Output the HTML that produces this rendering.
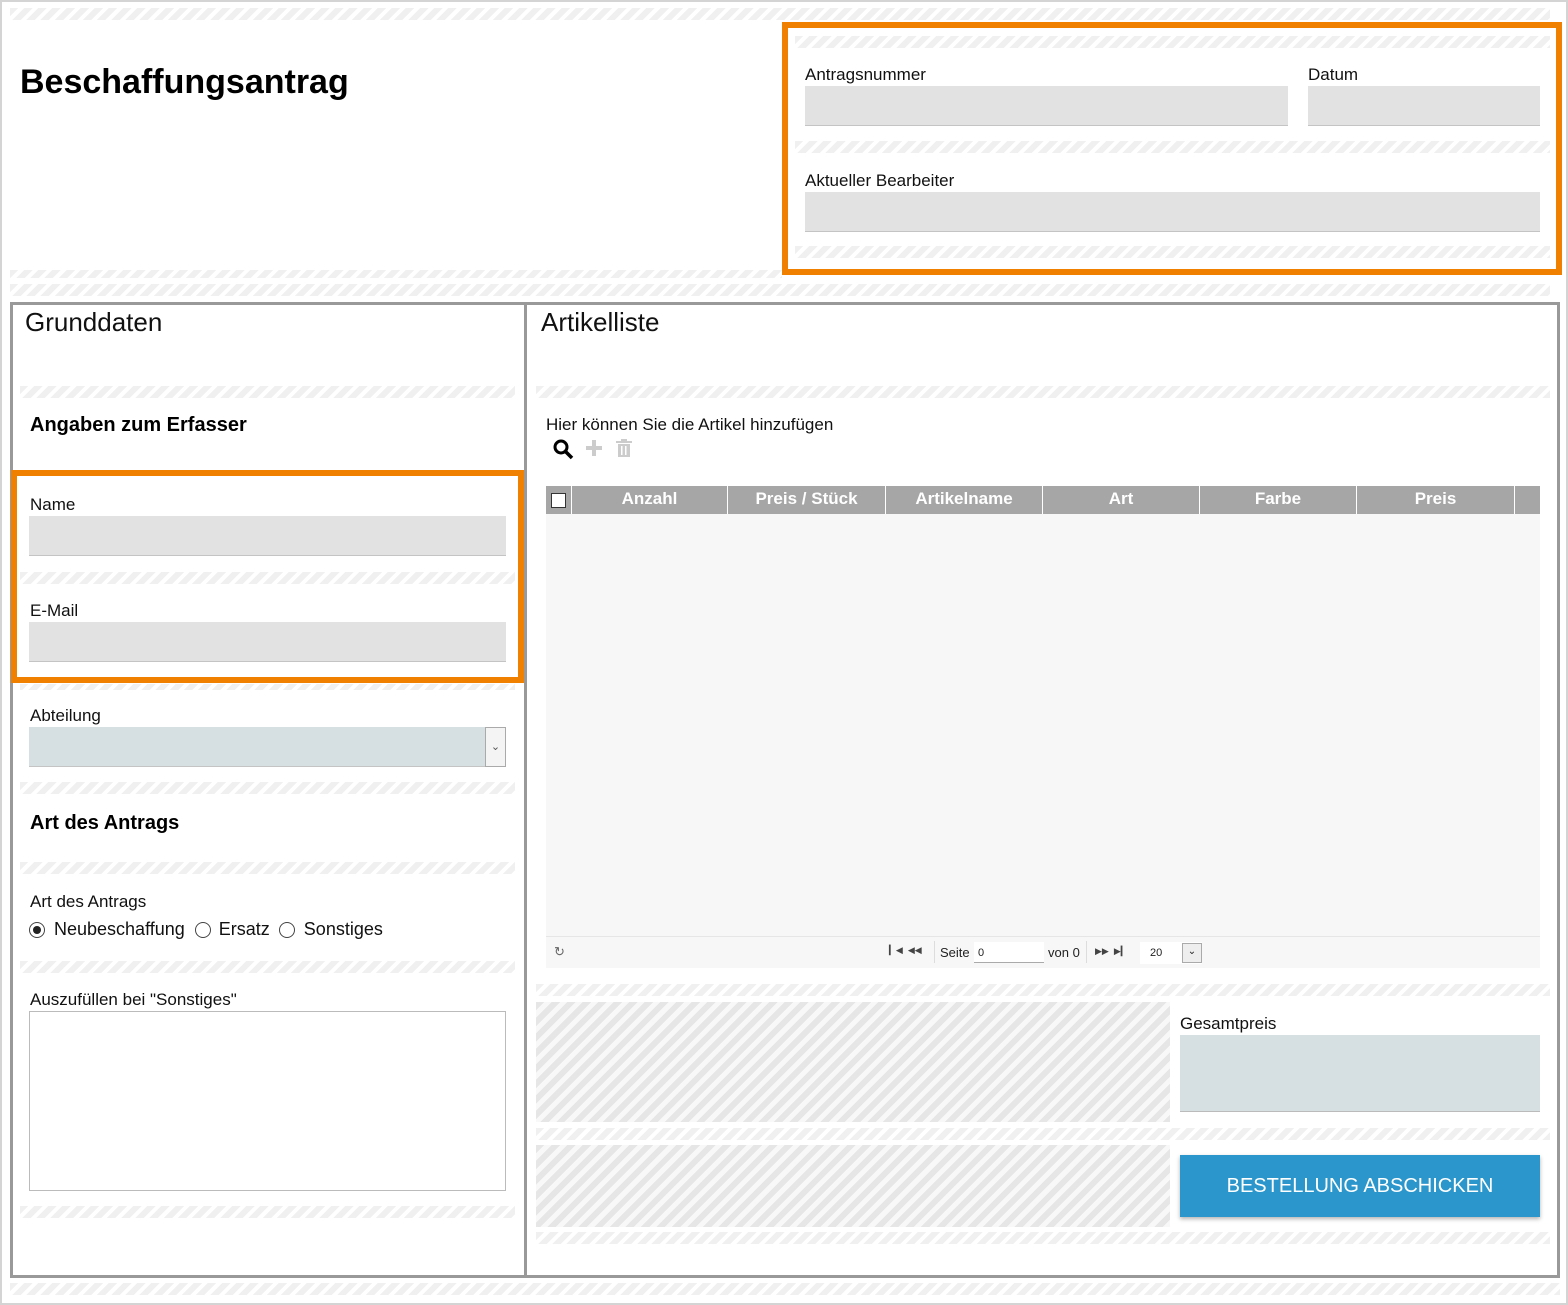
<!DOCTYPE html>
<html><head><meta charset="utf-8"><style>
*{box-sizing:border-box;margin:0;padding:0}
body{width:1568px;height:1305px;position:relative;background:#fff;font-family:"Liberation Sans",sans-serif;color:#111;overflow:hidden}
.a{position:absolute}
.s{position:absolute;height:12px;background:repeating-linear-gradient(135deg,#f0f0f0 0 6px,#fff 6px 10px)}
.h{position:absolute;background:repeating-linear-gradient(135deg,#e6e6e6 0 6px,#f8f8f8 6px 11px)}
.lb{position:absolute;font-size:17px}
.in{position:absolute;background:#e2e2e2;border-bottom:1px solid #c4c4c4}
.ob{position:absolute;border:6px solid #f08000}
.th{position:absolute;top:486px;height:28px;background:#a6a6a6;color:#fff;font-weight:bold;font-size:17px;text-align:center;line-height:26px;border-right:1px solid #fff}
</style></head><body>
<div class="a" style="left:0;top:0;width:1568px;height:1305px;border:2px solid #d4d4d4"></div>
<div class="s" style="left:10px;top:8px;width:1540px"></div>
<div class="a" style="left:20px;top:63px;font-size:34px;font-weight:bold;color:#000">Beschaffungsantrag</div>
<div class="ob" style="left:782px;top:22px;width:780px;height:253px"></div>
<div class="s" style="left:795px;top:36px;width:755px"></div>
<div class="lb" style="left:805px;top:65px">Antragsnummer</div>
<div class="lb" style="left:1308px;top:65px">Datum</div>
<div class="in" style="left:805px;top:86px;width:483px;height:40px"></div>
<div class="in" style="left:1308px;top:86px;width:232px;height:40px"></div>
<div class="s" style="left:795px;top:141px;width:755px"></div>
<div class="lb" style="left:805px;top:171px">Aktueller Bearbeiter</div>
<div class="in" style="left:805px;top:192px;width:735px;height:40px"></div>
<div class="s" style="left:795px;top:246px;width:755px"></div>
<div class="s" style="left:10px;top:270px;width:772px;height:8px"></div>
<div class="s" style="left:10px;top:284px;width:1540px"></div>
<!-- left panel -->
<div class="a" style="left:10px;top:302px;width:517px;height:976px;border:3px solid #999"></div>
<div class="a" style="left:25px;top:307px;font-size:26px">Grunddaten</div>
<div class="s" style="left:20px;top:386px;width:495px"></div>
<div class="a" style="left:30px;top:414px;font-size:20px;font-weight:bold;color:#000">Angaben zum Erfasser</div>
<div class="ob" style="left:11px;top:470px;width:513px;height:213px"></div>
<div class="lb" style="left:30px;top:495px">Name</div>
<div class="in" style="left:29px;top:516px;width:477px;height:40px"></div>
<div class="s" style="left:20px;top:572px;width:495px"></div>
<div class="lb" style="left:30px;top:601px">E-Mail</div>
<div class="in" style="left:29px;top:622px;width:477px;height:40px"></div>
<div class="s" style="left:20px;top:684px;width:495px;height:6px"></div>
<div class="lb" style="left:30px;top:706px">Abteilung</div>
<div class="a" style="left:29px;top:727px;width:477px;height:40px;background:#d6dfe2;border-bottom:1px solid #c4c4c4"></div>
<div class="a" style="left:485px;top:727px;width:21px;height:40px;background:#f4f4f4;border:1px solid #aaa;font-size:11px;text-align:center;line-height:38px;color:#555">&#8964;</div>
<div class="s" style="left:20px;top:782px;width:495px"></div>
<div class="a" style="left:30px;top:812px;font-size:20px;font-weight:bold;color:#000">Art des Antrags</div>
<div class="s" style="left:20px;top:862px;width:495px"></div>
<div class="lb" style="left:30px;top:892px">Art des Antrags</div>
<div class="a" style="left:29px;top:919px;font-size:18px;display:flex;align-items:center;gap:0">
<span style="width:16px;height:16px;border:1px solid #444;border-radius:50%;display:inline-flex;align-items:center;justify-content:center;margin-right:9px"><span style="width:8px;height:8px;background:#222;border-radius:50%"></span></span>Neubeschaffung
<span style="width:16px;height:16px;border:1px solid #444;border-radius:50%;display:inline-block;margin:0 8px 0 10px"></span>Ersatz
<span style="width:16px;height:16px;border:1px solid #444;border-radius:50%;display:inline-block;margin:0 9px 0 9px"></span>Sonstiges</div>
<div class="s" style="left:20px;top:961px;width:495px"></div>
<div class="lb" style="left:30px;top:990px">Auszufüllen bei "Sonstiges"</div>
<div class="a" style="left:29px;top:1011px;width:477px;height:180px;border:1px solid #bbb"></div>
<div class="s" style="left:20px;top:1206px;width:495px"></div>
<!-- right panel -->
<div class="a" style="left:524px;top:302px;width:1036px;height:976px;border:3px solid #999"></div>
<div class="a" style="left:541px;top:307px;font-size:26px">Artikelliste</div>
<div class="s" style="left:536px;top:386px;width:1014px"></div>
<div class="lb" style="left:546px;top:415px">Hier können Sie die Artikel hinzufügen</div>
<svg class="a" style="left:552px;top:438px" width="90" height="22"><circle cx="9" cy="9" r="6" fill="none" stroke="#000" stroke-width="3"/><line x1="13" y1="13" x2="20" y2="20" stroke="#000" stroke-width="3.5"/><rect x="34" y="8" width="16" height="4" fill="#ccc"/><rect x="40" y="2" width="4" height="16" fill="#ccc"/><rect x="64" y="3" width="16" height="2" fill="#ccc"/><rect x="69" y="1" width="6" height="2" fill="#ccc"/><rect x="66" y="6" width="12" height="13" fill="#ccc"/><rect x="69" y="8" width="1.5" height="9" fill="#fff"/><rect x="73" y="8" width="1.5" height="9" fill="#fff"/></svg>
<div class="a" style="left:546px;top:514px;width:994px;height:422px;background:#f7f7f7"></div>
<div class="th" style="left:546px;width:26px"><span style="display:inline-block;width:15px;height:15px;background:#fff;border:1px solid #333;margin-top:7px"></span></div>
<div class="th" style="left:572px;width:156px">Anzahl</div>
<div class="th" style="left:728px;width:158px">Preis / Stück</div>
<div class="th" style="left:886px;width:157px">Artikelname</div>
<div class="th" style="left:1043px;width:157px">Art</div>
<div class="th" style="left:1200px;width:157px">Farbe</div>
<div class="th" style="left:1357px;width:158px">Preis</div>
<div class="th" style="left:1515px;width:25px;border-right:0"></div>
<div class="a" style="left:546px;top:936px;width:994px;height:32px;background:#f7f7f7;border-top:1px solid #e6e6e6;font-size:13px;color:#222">
<span class="a" style="left:8px;top:7px;color:#666">&#8635;</span>
<span class="a" style="left:343px;top:8px;font-size:9px;color:#444">&#9614;&#9664; &nbsp;&#9664;&#9664;</span>
<span class="a" style="left:388px;top:4px;width:1px;height:22px;background:#ddd"></span>
<span class="a" style="left:394px;top:8px">Seite</span>
<span class="a" style="left:428px;top:5px;width:70px;height:21px;background:#fff;border-bottom:1px solid #aaa;font-size:11px;padding:5px 4px">0</span>
<span class="a" style="left:502px;top:8px">von 0</span>
<span class="a" style="left:540px;top:4px;width:1px;height:22px;background:#ddd"></span>
<span class="a" style="left:549px;top:9px;font-size:9px;color:#444">&#9654;&#9654; &nbsp;&#9654;&#9614;</span>
<span class="a" style="left:594px;top:5px;width:62px;height:22px;background:#fff;font-size:11px;padding:5px 10px">20</span>
<span class="a" style="left:636px;top:6px;width:20px;height:20px;background:#eee;border:1px solid #aaa;font-size:10px;text-align:center;line-height:16px">&#8964;</span>
</div>
<div class="s" style="left:536px;top:984px;width:1014px"></div>
<div class="h" style="left:536px;top:1002px;width:634px;height:120px"></div>
<div class="lb" style="left:1180px;top:1014px">Gesamtpreis</div>
<div class="a" style="left:1180px;top:1035px;width:360px;height:77px;background:#d6dfe2;border-bottom:1px solid #bbb"></div>
<div class="s" style="left:536px;top:1128px;width:1014px"></div>
<div class="h" style="left:536px;top:1145px;width:634px;height:82px"></div>
<div class="a" style="left:1180px;top:1155px;width:360px;height:62px;background:#2b96cb;color:#fff;font-size:20px;text-align:center;line-height:62px;box-shadow:0 2px 4px rgba(0,0,0,.3)">BESTELLUNG ABSCHICKEN</div>
<div class="s" style="left:536px;top:1232px;width:1014px"></div>
<div class="s" style="left:10px;top:1283px;width:1550px"></div>
</body></html>
